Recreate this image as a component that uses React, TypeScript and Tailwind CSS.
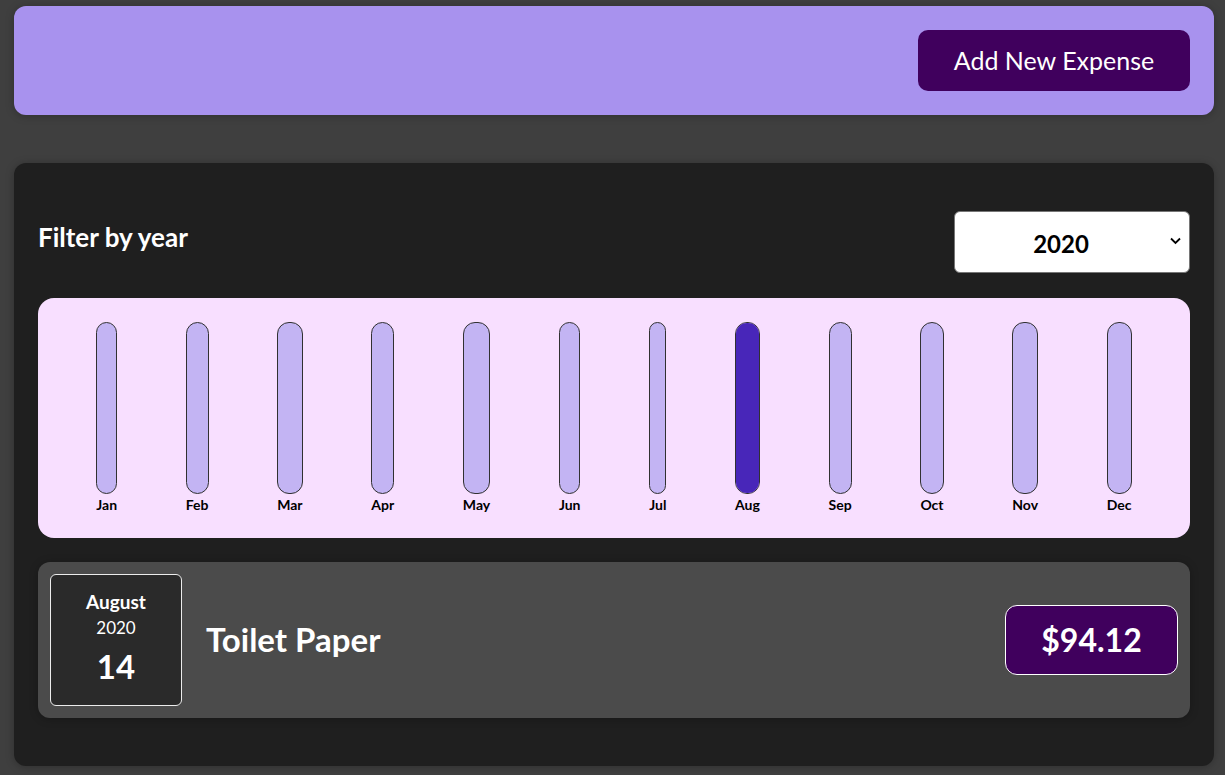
import { useState } from "react";

const months = ["Jan", "Feb", "Mar", "Apr", "May", "Jun", "Jul", "Aug", "Sep", "Oct", "Nov", "Dec"];

// only August has a value in 2020
const values = [0, 0, 0, 0, 0, 0, 0, 94.12, 0, 0, 0, 0];

function ChartBar({ label, value, max }: { label: string; value: number; max: number }) {
  const fill = max > 0 ? Math.round((value / max) * 100) + "%" : "0%";
  return (
    <div className="h-full flex flex-col items-center">
      <div className="h-full w-full border border-[#313131] rounded-[12px] bg-[#c3b4f3] overflow-hidden flex flex-col justify-end">
        <div className="bg-[#4826b9] w-full" style={{ height: fill }} />
      </div>
      <div className="text-[14px] font-bold text-black leading-[18px] pt-[2px]">{label}</div>
    </div>
  );
}

export default function App() {
  const [year, setYear] = useState("2020");
  const max = Math.max(...values);

  return (
    <div className="min-h-screen bg-[#3f3f3f] pt-[6px] pb-[9px] font-['Lato',sans-serif]">
      <div className="w-[1200px] ml-[14px] bg-[#a892ee] rounded-[12px] p-6 flex justify-end shadow-[0_1px_8px_rgba(0,0,0,0.25)]">
        <button className="h-[61px] w-[272px] bg-[#40005d] text-white text-[25px] rounded-[10px]">
          Add New Expense
        </button>
      </div>

      <div className="w-[1200px] ml-[14px] mt-[48px] bg-[#1f1f1f] rounded-[12px] px-6 pt-[48px] pb-[48px] shadow-[0_1px_8px_rgba(0,0,0,0.25)]">
        <div className="flex items-start justify-between">
          <h2 className="text-white font-bold text-[26px] mt-[7px]">Filter by year</h2>
          <div className="relative w-[236px] h-[62px]">
            <select
              value={year}
              onChange={(e) => setYear(e.target.value)}
              className="appearance-none w-full h-full bg-white rounded-[6px] border border-[#767676] text-black font-bold text-[24px] text-center pr-[22px] pt-[3px] outline-none"
            >
              <option>2022</option>
              <option>2021</option>
              <option>2020</option>
              <option>2019</option>
            </select>
            <svg
              className="absolute right-[9px] top-[26px] pointer-events-none"
              width="11"
              height="8"
              viewBox="0 0 11 8"
              fill="none"
            >
              <path d="M1 1.5l4.5 4.5 4.5-4.5" stroke="#000" strokeWidth="1.8" />
            </svg>
          </div>
        </div>

        <div className="mt-[25px] h-[240px] bg-[#f8dfff] rounded-[16px] p-6 flex justify-around">
          {months.map((m, i) => (
            <ChartBar key={m} label={m} value={values[i]} max={max} />
          ))}
        </div>

        <div className="mt-6 bg-[#4b4b4b] rounded-[12px] p-3 flex items-center shadow-[0_1px_8px_rgba(0,0,0,0.25)]">
          <div className="w-[132px] h-[132px] bg-[#2a2a2a] border border-[#ececec] rounded-[6px] flex flex-col items-center justify-center pb-[4px] text-white">
            <div className="font-bold text-[19px] leading-[24px]">August</div>
            <div className="text-[17px] leading-[24px] mt-[2px]">2020</div>
            <div className="font-bold text-[33px] leading-[40px] mt-[6px]">14</div>
          </div>
          <div className="flex-1 flex items-center justify-between ml-6">
            <h2 className="text-white font-bold text-[33px]">Toilet Paper</h2>
            <div className="w-[173px] h-[70px] bg-[#40005d] border border-white rounded-[12px] flex items-center justify-center text-white font-bold text-[32px]">
              $94.12
            </div>
          </div>
        </div>
      </div>
    </div>
  );
}
